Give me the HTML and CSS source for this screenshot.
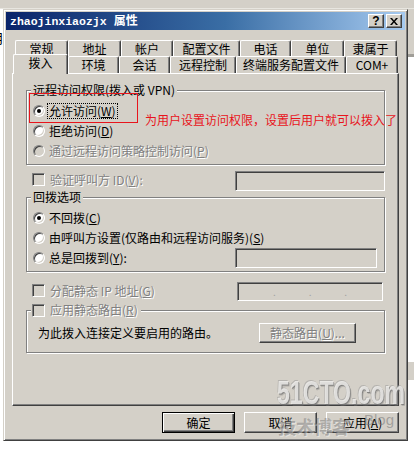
FILE: index.html
```html
<!DOCTYPE html>
<html lang="zh-CN">
<head>
<meta charset="utf-8">
<title>zhaojinxiaozjx 属性</title>
<link rel="stylesheet" href="styles.css">
</head>
<body>
<div class="screen">
  <div class="bg-top"></div>
  <div class="bg-left"><span class="peek">月</span></div>
  <div class="dialog">
    <div class="titlebar">
      <span class="title-text"><span class="latin">zhaojinxiaozjx</span>属性</span>
      <div class="caption-btns">
        <span class="cap cap-help">?</span>
        <span class="cap"><svg width="8" height="7" viewBox="0 0 8 7"><path d="M0 0h2l2 2.5L6 0h2L5 3.5 8 7H6L4 4.5 2 7H0l3-3.5z" fill="#000"/></svg></span>
      </div>
    </div>
    <div class="sheet">
      <div class="tabs">
        <div class="tabrow row1">
          <div class="tab">常规</div>
          <div class="tab">地址</div>
          <div class="tab">帐户</div>
          <div class="tab">配置文件</div>
          <div class="tab">电话</div>
          <div class="tab">单位</div>
          <div class="tab">隶属于</div>
        </div>
        <div class="tabrow row2">
          <div class="tab active">拨入</div>
          <div class="tab">环境</div>
          <div class="tab">会话</div>
          <div class="tab">远程控制</div>
          <div class="tab">终端服务配置文件</div>
          <div class="tab">COM+</div>
        </div>
      </div>
      <div class="panel">
        <div class="group">
          <div class="gtitle">远程访问权限(拨入或 VPN)</div>
          <div class="opts">
            <div class="opt"><span class="radio on"></span><span class="lbl focus">允许访问(<u>W</u>)</span></div>
            <div class="opt"><span class="radio"></span><span class="lbl">拒绝访问(<u>D</u>)</span></div>
            <div class="opt"><span class="radio dis"></span><span class="lbl dis">通过远程访问策略控制访问(<u>P</u>)</span></div>
          </div>
        </div>
        <div class="line">
          <span class="check dis"></span><span class="lbl dis">验证呼叫方 ID(<u>V</u>):</span>
          <span class="edit e-caller"></span>
        </div>
        <div class="group g2">
          <div class="gtitle">回拨选项</div>
          <div class="opts">
            <div class="opt"><span class="radio on"></span><span class="lbl">不回拨(<u>C</u>)</span></div>
            <div class="opt"><span class="radio"></span><span class="lbl">由呼叫方设置(仅路由和远程访问服务)(<u>S</u>)</span></div>
            <div class="opt"><span class="radio"></span><span class="lbl">总是回拨到(<u>Y</u>):</span><span class="edit e-callback"></span></div>
          </div>
        </div>
        <div class="line line-ip">
          <span class="check dis"></span><span class="lbl dis">分配静态 IP 地址(<u>G</u>)</span>
          <span class="edit e-ip"><span class="seg"></span><span class="dot">.</span><span class="seg"></span><span class="dot">.</span><span class="seg"></span><span class="dot">.</span><span class="seg"></span></span>
        </div>
        <div class="group g3">
          <div class="gtitle gtitle-check"><span class="check dis"></span><span class="lbl dis">应用静态路由(<u>R</u>)</span></div>
          <div class="route-row">
            <span class="route-text">为此拨入连接定义要启用的路由。</span>
            <span class="btn btn-route dis">静态路由(<u>U</u>)...</span>
          </div>
        </div>
      </div>
      <div class="actions">
        <span class="btn default">确定</span>
        <span class="btn">取消</span>
        <span class="btn">应用(<u>A</u>)</span>
      </div>
    </div>
  </div>
  <div class="bg-right"><span class="bg-right-top"></span><span class="bg-right-mid"></span></div>

  <div class="annot-box"></div>
  <div class="annot-text">为用户设置访问权限，设置后用户就可以拨入了</div>

  <div class="wm-main">51CTO.com</div>
  <div class="wm-sub">技术博客</div>
  <div class="wm-blog">Blog</div>
</div>
</body>
</html>
```

FILE: styles.css
```css
* { box-sizing: border-box; }
html, body { margin: 0; padding: 0; }
body {
  width: 414px;
  height: 449px;
  overflow: hidden;
  background: #fff;
  font-family: "Noto Sans CJK SC", "Liberation Sans", sans-serif;
  font-size: 12px;
  color: #000;
}
u { text-decoration: underline; text-underline-offset: 1px; }

.screen {
  position: relative;
  display: grid;
  grid-template-columns: 3px 405px 6px;
  grid-template-rows: 9px 432px 8px;
  width: 414px;
  height: 449px;
}
.bg-top { grid-column: 1 / 4; grid-row: 1; background: #d4d0c8; border-bottom: 1px solid #e8e6e0; }
.bg-left { grid-column: 1; grid-row: 2 / 4; background: #fff; overflow: hidden; padding-top: 22px; }
.peek { display: block; margin-left: -9px; font-size: 13px; line-height: 14px; }
.bg-right { grid-column: 3; grid-row: 2 / 4; background: #fff; display: flex; flex-direction: column; }
.bg-right-top { height: 48px; background: #d4d0c8; border-bottom: 3px solid #a09e98; }
.bg-right-mid { height: 18px; margin-top: 305px; background: #d4d0c8; }

/* dialog */
.dialog {
  grid-column: 2;
  grid-row: 2;
  background: #d4d0c8;
  border: 1px solid;
  border-color: #d4d0c8 #404040 #404040 #d4d0c8;
  box-shadow: inset 1px 1px #fff, inset -1px -1px #808080;
  padding: 2px;
  display: flex;
  flex-direction: column;
}
.titlebar {
  height: 18px;
  background: linear-gradient(to right, #0a246a, #3a6ea5 55%, #a6caf0);
  display: flex;
  align-items: center;
  padding-left: 4px;
}
.title-text { color: #fff; font-weight: bold; font-size: 12px; line-height: 18px; white-space: nowrap; }
.latin { font-family: "Liberation Mono", monospace; font-size: 11.5px; margin-right: 7px; }
.caption-btns { margin-left: auto; margin-right: 3px; display: flex; gap: 2px; }
.cap {
  width: 16px; height: 14px;
  background: #d4d0c8;
  border: 1px solid;
  border-color: #fff #404040 #404040 #fff;
  box-shadow: inset -1px -1px #808080;
  display: flex; align-items: center; justify-content: center;
}
.cap-help { font-family: "Liberation Sans", sans-serif; font-weight: bold; font-size: 12px; line-height: 12px; }

.sheet { margin: 10px 6px 0 6px; width: 387px; display: flex; flex-direction: column; }
.tabs { padding-left: 3px; }
.tabrow { display: grid; }
.row1 { grid-template-columns: 53px 53px 52px 67px 51px 53px 53px; height: 16px; }
.row2 { grid-template-columns: 53px 51px 51px 66px 110px 52px; height: 17px; }
.tab {
  background: #d4d0c8;
  border-top: 1px solid #fff;
  border-left: 1px solid #fff;
  border-right: 1px solid #404040;
  box-shadow: inset -1px 0 #808080;
  border-radius: 2px 2px 0 0;
  text-align: center;
  line-height: 15px;
  white-space: nowrap;
}
.tab.active {
  position: relative;
  z-index: 1;
  margin: -2px 0 -1px -2px;
}

.panel {
  height: 333px;
  border: 1px solid;
  border-color: #fff #404040 #404040 #fff;
  box-shadow: inset -1px -1px #808080;
  padding: 16px 13px 0 13px;
  display: flex;
  flex-direction: column;
}

.group {
  border: 1px solid #808080;
  box-shadow: inset 1px 1px #fff, 1px 1px #fff;
  padding-bottom: 3px;
}
.gtitle {
  width: fit-content;
  margin: -8px 0 0 4px;
  padding: 0 2px;
  line-height: 14px;
  height: 14px;
  background: #d4d0c8;
  white-space: nowrap;
}
.opts { margin-top: 4px; display: flex; flex-direction: column; }
.opt { display: flex; align-items: center; height: 20px; padding-left: 6px; gap: 2px; }
.lbl { border: 1px solid transparent; padding: 0 1px; line-height: 14px; white-space: nowrap; }
.lbl.focus { border: 1px dotted #000; }
.dis { color: #808080; text-shadow: 1px 1px 0 #fff; }

.radio {
  width: 12px; height: 12px;
  border-radius: 50%;
  background: #fff;
  border: 1px solid;
  border-color: #808080 #fff #fff #808080;
  box-shadow: inset 1px 1px #404040, inset -1px -1px #d4d0c8;
  display: flex; align-items: center; justify-content: center;
  flex: none;
}
.radio.on::after { content: ""; width: 4px; height: 4px; border-radius: 50%; background: #000; }
.radio.dis { background: #d4d0c8; }

.check {
  width: 13px; height: 13px;
  background: #fff;
  border: 1px solid;
  border-color: #808080 #fff #fff #808080;
  box-shadow: inset 1px 1px #404040, inset -1px -1px #d4d0c8;
  flex: none;
}
.check.dis { background: #d4d0c8; }

.line { display: flex; align-items: flex-start; height: 20px; padding-left: 6px; gap: 3px; margin-top: 6px; }
.line .check { margin-top: 2px; }
.line .lbl { margin-top: 1px; }
.line-ip { margin-top: 10px; height: 19px; }

.edit {
  margin-left: auto;
  height: 20px;
  background: #d4d0c8;
  border: 1px solid;
  border-color: #808080 #fff #fff #808080;
  box-shadow: inset 1px 1px #404040, inset -1px -1px #d4d0c8;
  flex: none;
}
.e-caller { width: 150px; }
.e-callback { width: 142px; margin-right: 7px; }
.e-ip { width: 146px; height: 19px; margin-right: 2px; display: flex; align-items: center; padding: 0 2px; }
.e-ip .seg { flex: 1; }
.e-ip .dot { color: #a0a0a0; font-size: 10px; line-height: 10px; }

.g2 { margin-top: 6px; }
.g3 { margin-top: 9px; padding-bottom: 9px; }
.gtitle-check { display: flex; align-items: center; gap: 3px; padding: 0 1px; }
.route-row { display: flex; align-items: center; height: 20px; margin-top: 6px; padding-left: 11px; }
.route-text { line-height: 16px; }

.btn {
  width: 73px; height: 21px;
  background: #d4d0c8;
  border: 1px solid;
  border-color: #fff #404040 #404040 #fff;
  box-shadow: inset -1px -1px #808080;
  display: flex; align-items: center; justify-content: center;
  line-height: 14px;
  white-space: nowrap;
}
.btn.default {
  border-color: #000;
  box-shadow: inset 1px 1px #fff, inset -1px -1px #404040, inset -2px -2px #808080;
}
.btn-route { width: 97px; height: 20px; margin-left: auto; margin-right: 28px; }
.actions { display: flex; justify-content: flex-end; gap: 9px; margin-top: 6px; }

/* annotation drawn over the screenshot */
.annot-box {
  position: absolute;
  left: 29px; top: 93px;
  width: 109px; height: 30px;
  border: 1px solid #e8141c;
}
.annot-text {
  position: absolute;
  left: 145px; top: 112px;
  color: #e8141c;
  line-height: 16px;
  white-space: nowrap;
}

/* watermark */
.wm-main {
  position: absolute;
  left: 277px; top: 374px;
  font-family: "Liberation Sans", sans-serif;
  font-weight: bold;
  font-size: 34px;
  line-height: 36px;
  transform: scaleX(0.68);
  transform-origin: left top;
  color: rgba(246, 245, 242, 0.8);
  text-shadow: 1px 1px 0 rgba(110, 110, 110, 0.7), 2px 2px 0 rgba(120, 120, 120, 0.35), -1px -1px 0 rgba(150, 150, 150, 0.5);
  white-space: nowrap;
}
.wm-sub {
  position: absolute;
  left: 278px; top: 415px;
  font-size: 18px;
  line-height: 22px;
  font-weight: bold;
  color: rgba(110, 110, 110, 0.45);
  text-shadow: 1px 1px 0 rgba(255, 255, 255, 0.4);
  white-space: nowrap;
}
.wm-blog {
  position: absolute;
  left: 364px; top: 412px;
  font-family: "Liberation Sans", sans-serif;
  font-size: 15px;
  line-height: 16px;
  color: rgba(120, 120, 120, 0.55);
}
```
